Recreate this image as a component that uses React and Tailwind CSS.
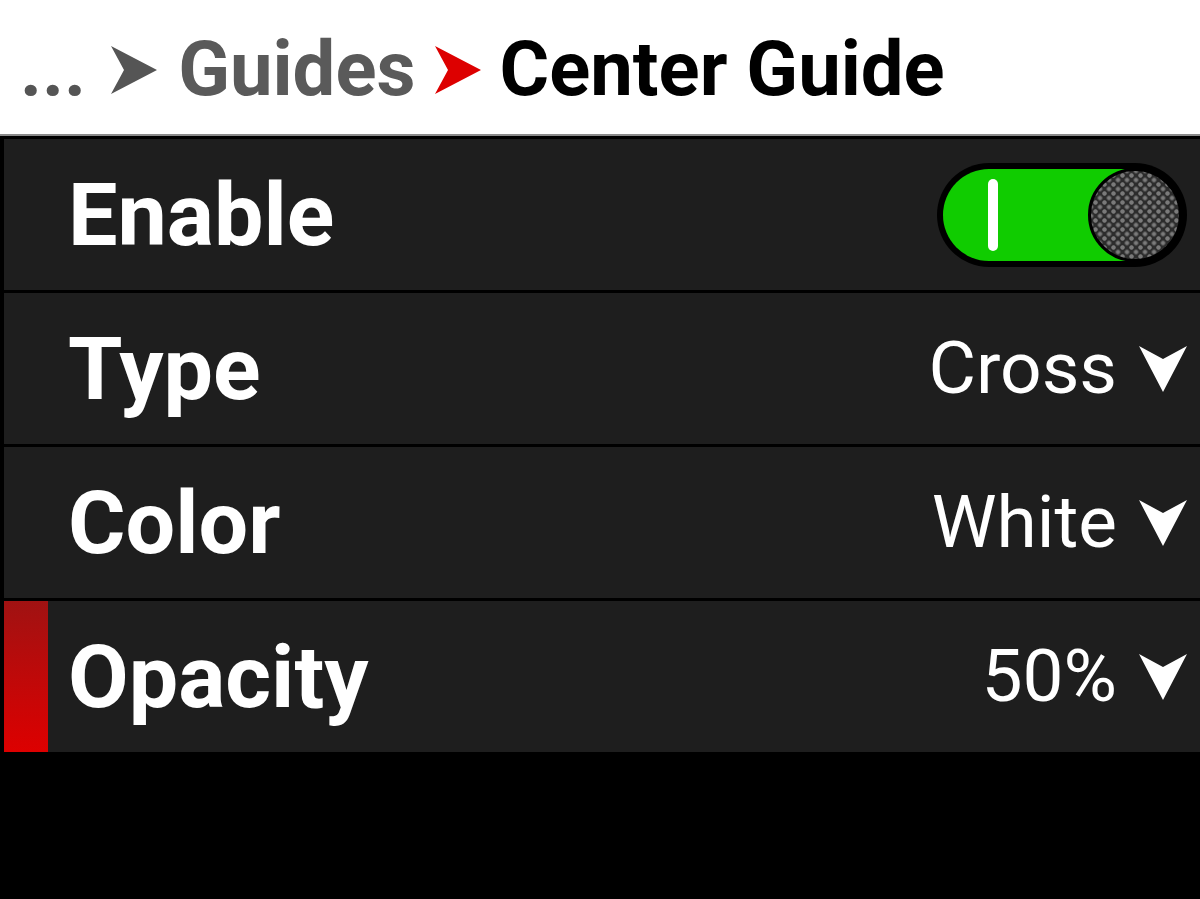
const rows = [
  { label: "Enable", toggle: true },
  { label: "Type", value: "Cross" },
  { label: "Color", value: "White" },
  { label: "Opacity", value: "50%", selected: true },
];

function Crumb({ color }) {
  return (
    <svg width="46" height="48" viewBox="0 0 46 48" className="shrink-0">
      <path d="M0 0 L46 24 L0 48 L13 24 Z" fill={color} />
    </svg>
  );
}

function Caret() {
  return (
    <svg width="48" height="46" viewBox="0 0 48 46" className="shrink-0">
      <path d="M0 0 L24 13 L48 0 L24 46 Z" fill="#ffffff" />
    </svg>
  );
}

function Toggle() {
  return (
    <div className="relative w-[250px] h-[104px] rounded-full bg-black p-[6px]">
      <div className="h-full w-full rounded-full bg-[#10cc00] flex items-center pl-[45px]">
        <div className="w-[10px] h-[72px] rounded-full bg-white" />
      </div>
      <div className="absolute right-[5px] top-[5px] w-[94px] h-[94px] rounded-full border-[3px] border-black bg-[#2c2c2c] bg-[radial-gradient(circle,#7a7a7a_1.8px,transparent_2.6px),radial-gradient(circle,#7a7a7a_1.8px,transparent_2.6px)] bg-[length:9px_9px] bg-[position:0_0,4.5px_4.5px]" />
    </div>
  );
}

export default function App() {
  return (
    <div className="w-[1200px] h-[899px] bg-black flex flex-col" style={{ fontFamily: "Roboto, 'Liberation Sans', sans-serif" }}>
      <div className="h-[136px] bg-white flex items-center pl-[20px] pt-[4px] border-b-2 border-[#8a8a8a]">
        <span className="text-[76px] font-bold leading-none text-[#555555]">...</span>
        <span className="ml-[25px] mt-[2px]"><Crumb color="#555555" /></span>
        <span className="ml-[21px] text-[76px] font-bold leading-none text-[#5a5a5a]">Guides</span>
        <span className="ml-[19px] mt-[2px]"><Crumb color="#dd0000" /></span>
        <span className="ml-[19px] text-[76px] font-bold leading-none text-black">Center Guide</span>
      </div>
      <div className="flex flex-col gap-[3px] pt-[3px] pl-[4px]">
        {rows.map((row, index) => (
          <div key={index} className="h-[151px] bg-[#1e1e1e] flex items-center">
            <div className={`w-[44px] h-full ${row.selected ? "bg-[linear-gradient(to_bottom,#a01212,#dd0000)]" : ""}`} />
            <span className="ml-[20px] text-[88px] font-bold leading-none text-white">{row.label}</span>
            <div className="ml-auto flex items-center gap-[22px] pr-[13px]">
              {row.toggle ? (
                <Toggle />
              ) : (
                <>
                  <span className="text-[73px] leading-none text-white">{row.value}</span>
                  <Caret />
                </>
              )}
            </div>
          </div>
        ))}
      </div>
    </div>
  );
}
